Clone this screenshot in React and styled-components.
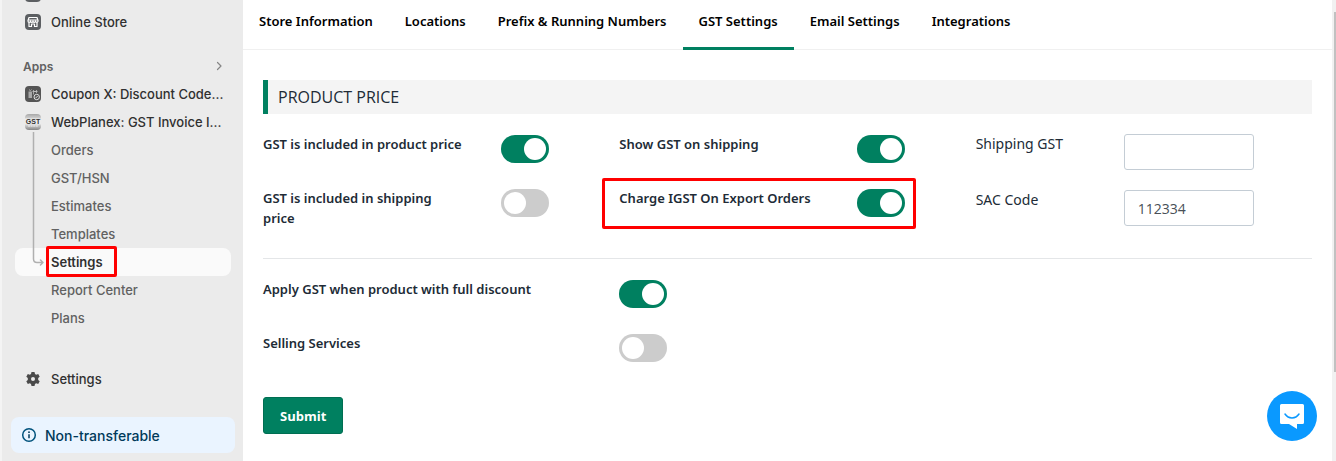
import React from 'react'
import styled, { createGlobalStyle, css } from 'styled-components'

const colors = {
  primary: '#008060',
  text: '#212b36',
  sidebar: '#ebebeb',
  nav: '#303030',
  navMuted: '#616161',
  border: '#e4e6e8',
  highlight: '#ff0000',
  chat: '#0a99ff',
}

const fonts = {
  nav: "Inter, 'Liberation Sans', sans-serif",
  body: "'Open Sans', 'Noto Sans', sans-serif",
  label: "'Noto Sans', 'Open Sans', sans-serif",
}

const GlobalStyle = createGlobalStyle`
  * {
    box-sizing: border-box;
  }

  body {
    margin: 0;
    background: #fff;
    color: ${colors.text};
    font-family: ${fonts.body};
    overflow: hidden;
  }
`

const Layout = styled.div`
  display: grid;
  grid-template-columns: 243px minmax(0, 1fr) 4px;
  height: 100vh;
`

const Sidebar = styled.nav`
  display: flex;
  flex-direction: column;
  overflow: hidden;
  background: ${colors.sidebar};
  border-left: 2px solid #f4f4f4;
  color: ${colors.nav};
  font-family: ${fonts.nav};
  font-size: 13px;
  font-weight: 500;
`

const NavList = styled.ul`
  list-style: none;
  margin: 0;
  padding: 0 12px 0 13px;
`

const NavLink = styled.a`
  display: flex;
  align-items: center;
  gap: 10px;
  height: 28px;
  padding: 0 8px 0 10px;
  border-radius: 8px;
  color: inherit;
  text-decoration: none;
  white-space: nowrap;

  svg {
    flex: none;
  }
`

const ClippedItem = styled.li`
  height: 8px;
  display: flex;
  align-items: flex-end;
  padding: 0 10px 6px;
  overflow: hidden;
`

const GroupTitle = styled.a`
  display: flex;
  align-items: center;
  justify-content: space-between;
  height: 28px;
  margin: 16px 12px 0 13px;
  padding: 0 8px;
  color: ${colors.navMuted};
  font-size: 12px;
  font-weight: 600;
  text-decoration: none;
`

const SubList = styled(NavList)`
  position: relative;
`

const SubLink = styled(NavLink)`
  padding-left: 36px;
  color: ${colors.navMuted};

  ${({ $active }) =>
    $active &&
    css`
      background: #fafafa;
      color: ${colors.nav};
      font-weight: 600;
    `}
`

const TreeLine = styled.svg`
  position: absolute;
  top: -4px;
  left: 30px;
  pointer-events: none;
`

const Marked = styled.span`
  position: relative;

  &::after {
    content: '';
    position: absolute;
    inset: ${({ $inset }) => $inset};
    border: 3px solid ${colors.highlight};
    border-radius: 2px;
    pointer-events: none;
  }
`

const NavFooter = styled.div`
  margin-top: 33px;
`

const Notice = styled.a`
  display: flex;
  align-items: center;
  gap: 8px;
  height: 36px;
  margin: 24px 8px 0 9px;
  padding: 0 10px;
  border-radius: 8px;
  background: #eaf4ff;
  color: #003a5a;
  font-size: 14px;
  text-decoration: none;
`

const Tabs = styled.div`
  display: flex;
  height: 50px;
  border-bottom: 1px solid #f0f0f0;
`

const Tab = styled.a`
  display: flex;
  height: 50px;
  padding: 11px 16px 0;
  border-bottom: 3px solid
    ${({ $active }) => ($active ? colors.primary : 'transparent')};
  color: #000;
  font-family: ${fonts.label};
  font-size: 13px;
  font-weight: 600;
  line-height: 20px;
  text-decoration: none;
  white-space: nowrap;
`

const Form = styled.form`
  padding: 30px 20px 0;
`

const SectionTitle = styled.h2`
  margin: 0;
  padding: 0 10px;
  border-left: 5px solid ${colors.primary};
  background: #f4f4f4;
  font-size: 16px;
  font-weight: 400;
  line-height: 34px;
`

const Columns = styled.div`
  display: grid;
  grid-template-columns: repeat(3, minmax(0, 1fr));
  gap: 0 20px;
  padding: 20px 0 30px;
  border-bottom: 1px solid ${colors.border};
`

const Column = styled.div`
  display: grid;
  grid-template-columns: 27fr 13fr;
  grid-auto-rows: 40px;
  align-content: start;
  gap: 14px 34px;
`

const InputColumn = styled(Column)`
  grid-template-columns: 138px 130px;
  grid-auto-rows: 36px;
  gap: 20px 10px;
`

const Field = styled.div`
  display: grid;
  grid-template-columns: subgrid;
  grid-column: 1 / -1;
  align-items: start;
  position: relative;
`

const ExportField = styled(Field)`
  &::after {
    content: '';
    position: absolute;
    inset: -10px 40px -1px -17px;
    border: 3px solid ${colors.highlight};
    border-radius: 2px;
    pointer-events: none;
  }
`

const Label = styled.label`
  padding-right: 2px;
  font-family: ${fonts.label};
  font-size: 13px;
  font-weight: 600;
  line-height: 20px;
`

const InputLabel = styled(Label)`
  font-size: 14px;
  font-weight: 400;
`

const Switch = styled.input`
  appearance: none;
  width: 48px;
  height: 28px;
  margin: 1px 0 0;
  padding: 3px;
  border-radius: 14px;
  background: #ccc;

  &::before {
    content: '';
    display: block;
    width: 22px;
    height: 22px;
    border-radius: 50%;
    background: #fff;
  }

  &:checked {
    background: ${colors.primary};
  }

  &:checked::before {
    margin-left: 20px;
  }
`

const TextInput = styled.input`
  width: 130px;
  height: 36px;
  padding: 0 13px;
  border: 1px solid #c4cdd5;
  border-radius: 3px;
  background: #fff;
  color: #495057;
  font-family: ${fonts.body};
  font-size: 14px;
  font-weight: 400;
`

const Options = styled.div`
  display: grid;
  grid-template-columns: repeat(3, minmax(0, 1fr));
  grid-auto-rows: 40px;
  gap: 14px 20px;
  padding: 20px 0 24px;
`

const SubmitButton = styled.button`
  height: 37px;
  padding: 0 16px;
  border: 1px solid #006e52;
  border-radius: 3px;
  background: ${colors.primary};
  color: #fff;
  font-family: ${fonts.body};
  font-size: 13px;
  font-weight: 700;
`

const ChatButton = styled.button`
  position: fixed;
  right: 19px;
  bottom: 20px;
  display: grid;
  place-items: center;
  width: 50px;
  height: 50px;
  padding: 0;
  border: 0;
  border-radius: 50%;
  background: ${colors.chat};
`

const ScrollTrack = styled.div`
  padding-top: 12px;
  background: #f1f1f1;
`

const ScrollThumb = styled.div`
  height: 360px;
  margin-left: 2px;
  background: #c1c1c1;
`

const StoreIcon = () => (
  <svg width='16' height='16' viewBox='0 0 16 16' fill='none'>
    <rect width='16' height='16' rx='4' fill='#5c5f62' />
    <path
      d='M4 3.500h8l1 3v.5a1.250 1.300 0 0 1-2.500 0 1.250 1.300 0 0 1-2.500 0 1.250 1.300 0 0 1-2.500 0A1.250 1.300 0 0 1 3 7v-.5zM4 8.500v4h2.500v-2.500h3v2.500H12v-4M3.500 6h9'
      stroke='#fff'
      strokeWidth='1.200'
      strokeLinejoin='round'
    />
  </svg>
)

const CouponIcon = () => (
  <svg width='16' height='16' viewBox='0 0 16 16' fill='none'>
    <rect width='16' height='16' rx='4' fill='#555' />
    <path d='M3.500 5.500h3.500v6.500H3.500z' fill='#a8a8a8' />
    <path
      d='M4 3.500l1.300 1.200L6.600 3.500M8.500 4v4.500M11.500 4v3'
      stroke='#a8a8a8'
    />
    <path d='M7.500 5.500h5' stroke='#bbb' />
    <circle cx='11.700' cy='11' r='2.700' fill='#555' stroke='#dedede' />
    <path d='M10.700 12l2-2' stroke='#dedede' />
  </svg>
)

const GstIcon = () => (
  <svg width='16' height='16' viewBox='0 0 16 16'>
    <defs>
      <linearGradient id='gst' x1='0' y1='0' x2='0' y2='1'>
        <stop offset='0' stopColor='#a8a8a8' />
        <stop offset='.35' stopColor='#dcdcdc' />
        <stop offset='.7' stopColor='#d0d0d0' />
        <stop offset='1' stopColor='#858585' />
      </linearGradient>
    </defs>
    <rect width='16' height='16' rx='4' fill='url(#gst)' />
    <path d='M0 4.500h16v6H0z' fill='#ececec' />
    <text
      x='8'
      y='10'
      textAnchor='middle'
      fontFamily='Liberation Sans, sans-serif'
      fontSize='7'
      fontWeight='700'
      fill='#333'
    >
      GST
    </text>
    <path d='M3 12h10' stroke='#eee' strokeDasharray='2 .6' />
  </svg>
)

const ChevronIcon = () => (
  <svg width='8' height='10' viewBox='0 0 8 10' fill='none'>
    <path
      d='M2.500 1.500L6 5 2.500 8.500'
      stroke='#858585'
      strokeWidth='1.200'
      strokeLinecap='round'
      strokeLinejoin='round'
    />
  </svg>
)

const GearIcon = () => (
  <svg width='16' height='16' viewBox='0 0 16 16'>
    <path
      fill='#4a4a4a'
      fillRule='evenodd'
      d='M6.500 1h3l.5 2 1.200.7 2-.6 1.500 2.600L13.200 7.100v1.800l1.500 1.400-1.500 2.600-2-.6L10 13l-.5 2h-3L6 13l-1.200-.7-2 .6-1.500-2.600L2.800 8.900V7.100L1.300 5.700l1.500-2.600 2 .6L6 3zM8 6a2 2 0 1 0 0 4 2 2 0 0 0 0-4z'
    />
  </svg>
)

const InfoIcon = () => (
  <svg width='16' height='16' viewBox='0 0 16 16' fill='none'>
    <circle cx='8' cy='8' r='6.300' stroke='#00527c' strokeWidth='1.500' />
    <path d='M8 7.300v4' stroke='#003a5a' strokeWidth='1.500' />
    <circle cx='8' cy='5.200' r='.9' fill='#003a5a' />
  </svg>
)

const ChatIcon = () => (
  <svg width='26' height='26' viewBox='0 0 26 26' fill='none'>
    <path
      d='M2.500 1h21A1.500 1.500 0 0 1 25 2.500v17a1.500 1.500 0 0 1-1.500 1.500H18v5l-8-5H2.500A1.500 1.500 0 0 1 1 19.500v-17A1.500 1.500 0 0 1 2.500 1z'
      fill='#fff'
    />
    <path
      d='M6 11c3.500 5.200 10.500 5.200 14 0'
      stroke={colors.chat}
      strokeWidth='1.500'
      strokeLinecap='round'
    />
  </svg>
)

const appPages = [
  'Orders',
  'GST/HSN',
  'Estimates',
  'Templates',
  'Settings',
  'Report Center',
  'Plans',
]

const tabs = [
  'Store Information',
  'Locations',
  'Prefix & Running Numbers',
  'GST Settings',
  'Email Settings',
  'Integrations',
]

function SwitchField({ as: Wrapper = Field, id, label, checked }) {
  return (
    <Wrapper>
      <Label htmlFor={id}>{label}</Label>
      <Switch id={id} type='checkbox' role='switch' defaultChecked={checked} />
    </Wrapper>
  )
}

function InputField({ id, label, value }) {
  return (
    <Field>
      <InputLabel htmlFor={id}>{label}</InputLabel>
      <TextInput id={id} type='text' defaultValue={value} />
    </Field>
  )
}

function SideNav() {
  return (
    <Sidebar>
      <NavList>
        <ClippedItem>
          <StoreIcon />
        </ClippedItem>
        <li>
          <NavLink href='#store'>
            <StoreIcon />
            Online Store
          </NavLink>
        </li>
      </NavList>
      <GroupTitle href='#apps'>
        Apps
        <ChevronIcon />
      </GroupTitle>
      <NavList>
        <li>
          <NavLink href='#coupon'>
            <CouponIcon />
            Coupon X: Discount Code...
          </NavLink>
        </li>
        <li>
          <NavLink href='#gst'>
            <GstIcon />
            WebPlanex: GST Invoice I...
          </NavLink>
        </li>
      </NavList>
      <SubList>
        {appPages.map((page) => (
          <li key={page}>
            {page === 'Settings' ? (
              <SubLink href='#app-settings' $active>
                <Marked $inset='-8px -14px -7px -5px'>{page}</Marked>
              </SubLink>
            ) : (
              <SubLink href='#app'>{page}</SubLink>
            )}
          </li>
        ))}
        <TreeLine width='12' height='136' viewBox='0 0 12 136' fill='none'>
          <path
            d='M1.500 0v127q0 3.500 3.500 3.500h6M8.500 128l2.500 2.500-2.500 2.500'
            stroke='#b0b0b0'
            strokeWidth='1.500'
            strokeLinecap='round'
            strokeLinejoin='round'
          />
        </TreeLine>
      </SubList>
      <NavFooter>
        <NavList as='div'>
          <NavLink href='#settings'>
            <GearIcon />
            Settings
          </NavLink>
        </NavList>
        <Notice href='#notice'>
          <InfoIcon />
          Non-transferable
        </Notice>
      </NavFooter>
    </Sidebar>
  )
}

export default function App() {
  return (
    <>
      <GlobalStyle />
      <Layout>
        <SideNav />
        <main>
          <Tabs>
            {tabs.map((tab) => (
              <Tab key={tab} href='#tab' $active={tab === 'GST Settings'}>
                {tab}
              </Tab>
            ))}
          </Tabs>
          <Form>
            <SectionTitle>PRODUCT PRICE</SectionTitle>
            <Columns>
              <Column>
                <SwitchField
                  id='product-gst'
                  label='GST is included in product price'
                  checked
                />
                <SwitchField
                  id='shipping-included'
                  label='GST is included in shipping price'
                />
              </Column>
              <Column>
                <SwitchField
                  id='show-shipping'
                  label='Show GST on shipping'
                  checked
                />
                <SwitchField
                  as={ExportField}
                  id='export-igst'
                  label='Charge IGST On Export Orders'
                  checked
                />
              </Column>
              <InputColumn>
                <InputField id='shipping-gst' label='Shipping GST' />
                <InputField id='sac-code' label='SAC Code' value='112334' />
              </InputColumn>
            </Columns>
            <Options>
              <SwitchField
                id='full-discount'
                label='Apply GST when product with full discount'
                checked
              />
              <SwitchField id='selling-services' label='Selling Services' />
            </Options>
            <SubmitButton type='button'>Submit</SubmitButton>
          </Form>
        </main>
        <ScrollTrack>
          <ScrollThumb />
        </ScrollTrack>
      </Layout>
      <ChatButton type='button' aria-label='Open chat'>
        <ChatIcon />
      </ChatButton>
    </>
  )
}
